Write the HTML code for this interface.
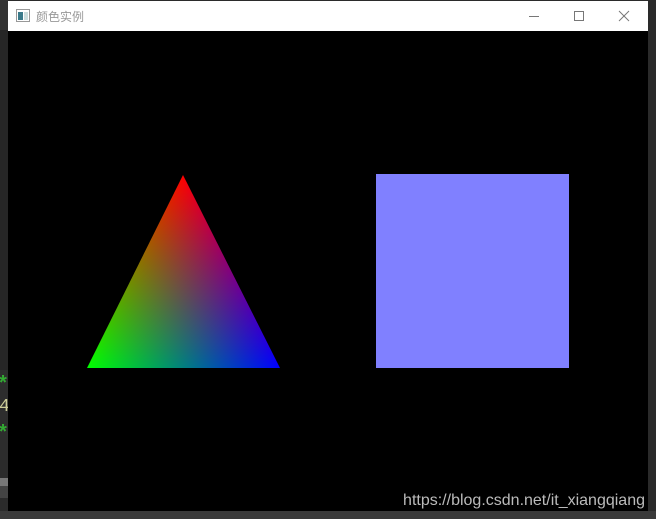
<!DOCTYPE html>
<html><head><meta charset="utf-8"><style>
html,body{margin:0;padding:0;width:656px;height:519px;overflow:hidden;background:#2b2b2b;font-family:"Liberation Sans","Noto Sans CJK SC",sans-serif}
.lb{position:absolute;left:0;width:8px}
#win{position:absolute;left:8px;top:1px;width:640px;height:510px;background:#000}
#title{position:absolute;left:0;top:0;width:640px;height:30px;background:#fff}
#title .t{position:absolute;left:28px;top:7px;font-size:12px;color:#999}
#bottom{position:absolute;left:0;top:511px;width:656px;height:8px;background:#3a3a3a}
.p{mix-blend-mode:plus-lighter}
</style></head><body>
<div class="lb" style="top:0;height:30px;background:#333"></div>
<div class="lb" style="top:30px;height:340px;background:#262626"></div>
<div class="lb" style="top:370px;height:90px;background:#2d2d2d"></div>
<div class="lb" style="top:478px;height:8px;background:#777"></div>
<div class="lb" style="top:486px;height:12px;background:#444"></div>
<div style="position:absolute;left:-3px;top:374px;color:#3a3;font:bold 20px 'Liberation Mono',monospace">*</div>
<div style="position:absolute;left:-1px;top:397px;color:#cc9;font:18px 'Liberation Mono',monospace">4</div>
<div style="position:absolute;left:-3px;top:423px;color:#3a3;font:bold 20px 'Liberation Mono',monospace">*</div>
<div style="position:absolute;left:648px;top:0;width:8px;height:511px;background:#2a2a2a"></div>
<div id="win">
 <div id="title">
  <svg style="position:absolute;left:8px;top:8px" width="14" height="13"><rect x="0.5" y="0.5" width="13" height="12" fill="#fff" stroke="#999"/><rect x="2" y="3" width="5" height="8" fill="#3a7a8a"/><rect x="8" y="3" width="4" height="8" fill="#cdd"/></svg>
  <span class="t">颜色实例</span>
  <svg style="position:absolute;left:520px;top:9px" width="112" height="14" stroke="#777" fill="none">
   <line x1="1" y1="6.5" x2="11" y2="6.5"/>
   <rect x="46.5" y="1.5" width="9" height="9"/>
   <line x1="91" y1="1" x2="101" y2="11"/><line x1="101" y1="1" x2="91" y2="11"/>
  </svg>
 </div>
 <svg style="position:absolute;left:0;top:0" width="640" height="510">
  <defs>
   <linearGradient id="gr" x1="175" y1="174" x2="175" y2="367" gradientUnits="userSpaceOnUse"><stop offset="0" stop-color="#ff0000"/><stop offset="1" stop-color="#000"/></linearGradient>
   <linearGradient id="gg" x1="79" y1="367" x2="233.1" y2="289.6" gradientUnits="userSpaceOnUse"><stop offset="0" stop-color="#00ff00"/><stop offset="1" stop-color="#000"/></linearGradient>
   <linearGradient id="gb" x1="272" y1="367" x2="117.3" y2="290" gradientUnits="userSpaceOnUse"><stop offset="0" stop-color="#0000ff"/><stop offset="1" stop-color="#000"/></linearGradient>
  </defs>
  <g style="isolation:isolate">
   <polygon points="175,174 79,367 272,367" fill="url(#gr)"/>
   <polygon class="p" points="175,174 79,367 272,367" fill="url(#gg)"/>
   <polygon class="p" points="175,174 79,367 272,367" fill="url(#gb)"/>
  </g>
  <rect x="368" y="173" width="193" height="194" fill="#8080ff"/>
  <text x="637" y="504" text-anchor="end" fill="#bbb" font-size="16" font-family="Liberation Sans,sans-serif">https://blog.csdn.net/it_xiangqiang</text>
 </svg>
</div>
<div id="bottom"></div>
</body></html>
